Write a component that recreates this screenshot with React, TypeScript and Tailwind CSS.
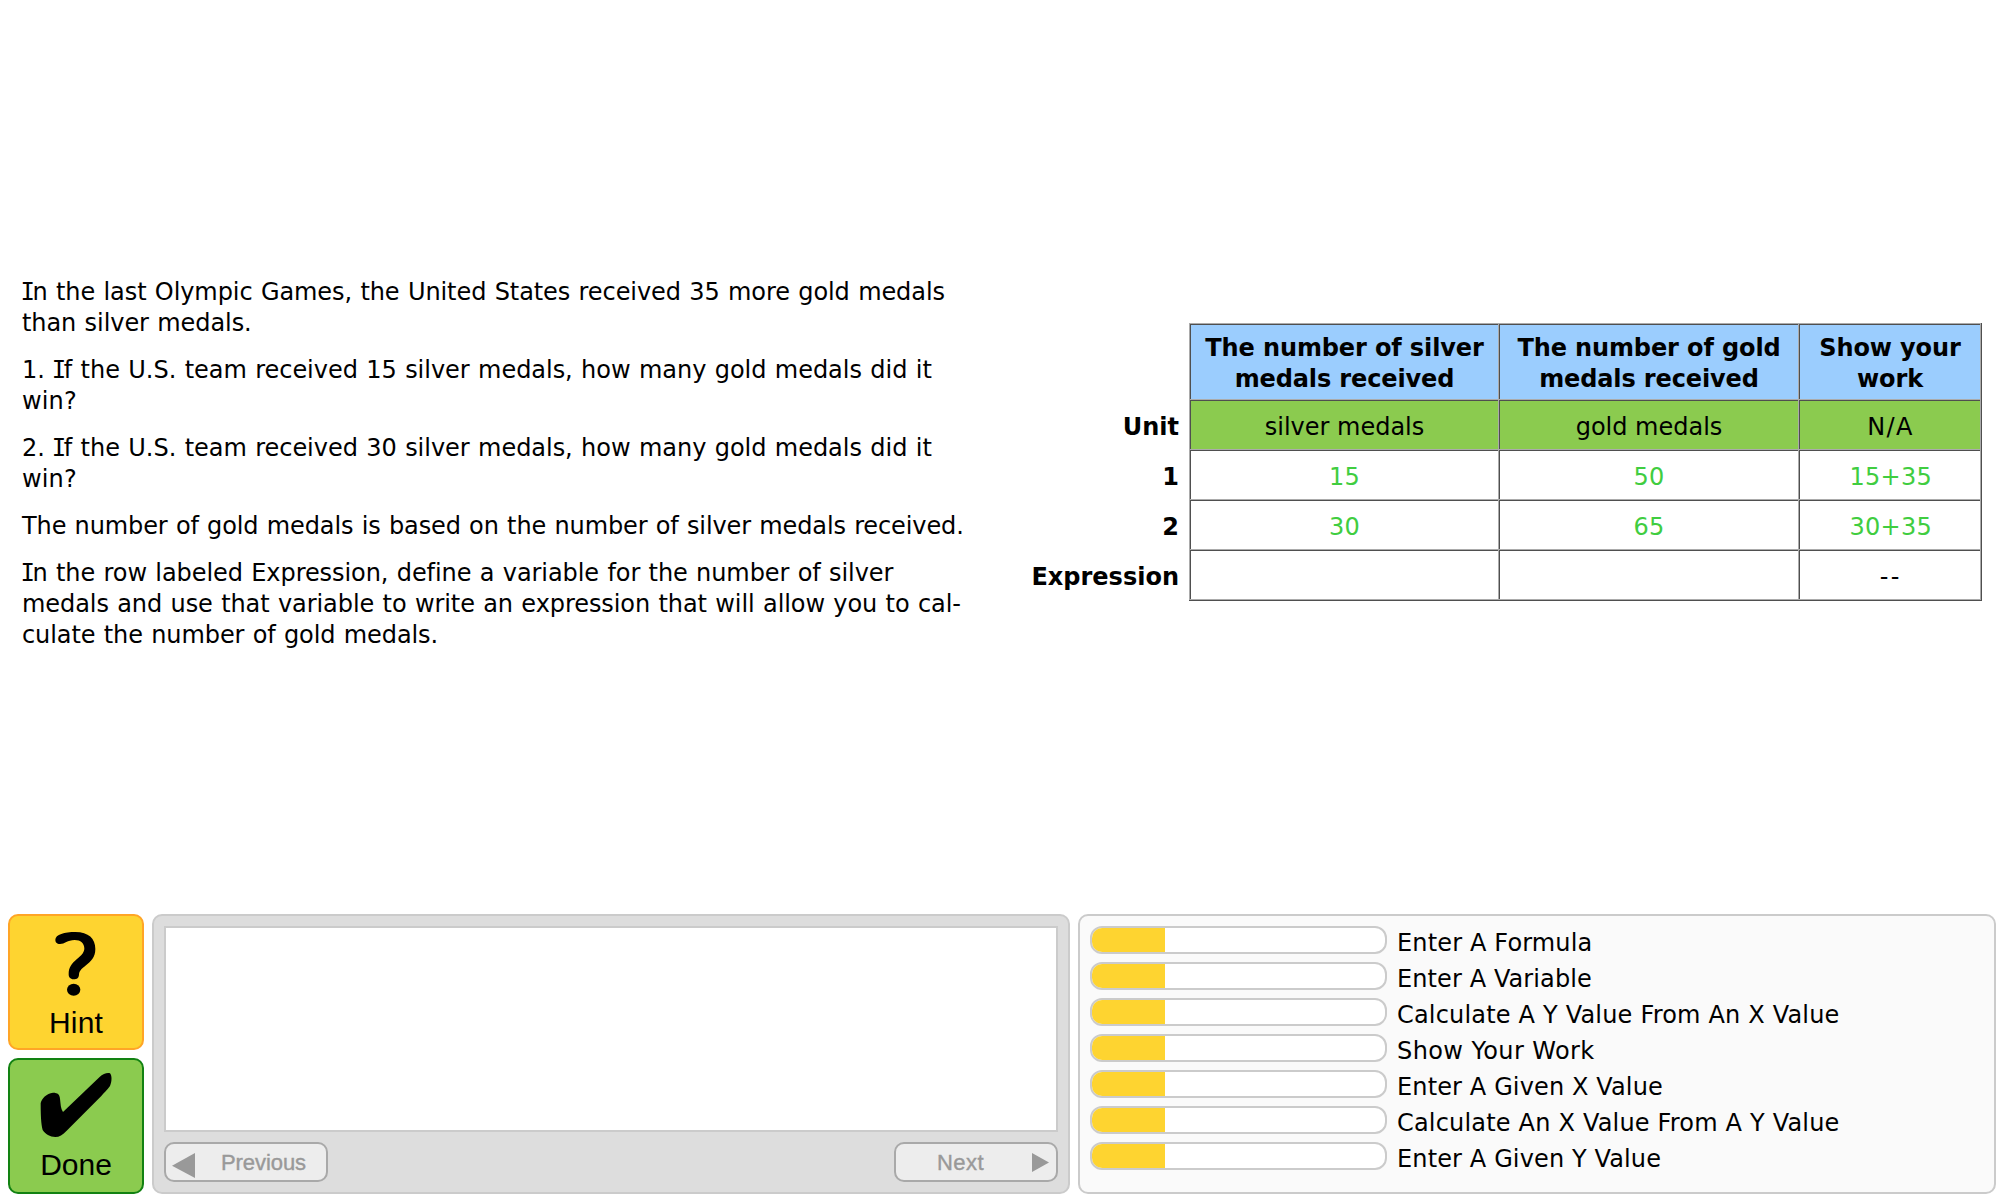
type Line = { text: string; spacing: string };

const paragraphs: Line[][] = [
  [
    { text: 'In the last Olympic Games, the United States received 35 more gold medals', spacing: 'tracking-[-0.075px]' },
    { text: 'than silver medals.', spacing: 'tracking-[-0.07px]' },
  ],
  [
    { text: '1. If the U.S. team received 15 silver medals, how many gold medals did it', spacing: 'tracking-[-0.03px]' },
    { text: 'win?', spacing: 'tracking-[0.16px]' },
  ],
  [
    { text: '2. If the U.S. team received 30 silver medals, how many gold medals did it', spacing: 'tracking-[-0.03px]' },
    { text: 'win?', spacing: 'tracking-[0.16px]' },
  ],
  [{ text: 'The number of gold medals is based on the number of silver medals received.', spacing: 'tracking-[-0.115px]' }],
  [
    { text: 'In the row labeled Expression, define a variable for the number of silver', spacing: 'tracking-[-0.07px]' },
    { text: 'medals and use that variable to write an expression that will allow you to cal-', spacing: 'tracking-[-0.07px]' },
    { text: 'culate the number of gold medals.', spacing: 'tracking-[-0.09px]' },
  ],
];

const rowLabels = ['Unit', '1', '2', 'Expression'];

const headers = [
  ['The number of silver', 'medals received'],
  ['The number of gold', 'medals received'],
  ['Show your', 'work'],
];

const rows: { cells: string[]; style: string }[] = [
  { cells: ['silver medals', 'gold medals', 'N/A'], style: 'bg-[#8bcb4f] text-black' },
  { cells: ['15', '50', '15+35'], style: 'bg-white text-[#40cd40] tracking-[0.27px]' },
  { cells: ['30', '65', '30+35'], style: 'bg-white text-[#40cd40] tracking-[0.27px]' },
  { cells: ['', '', '--'], style: 'bg-white text-black tracking-[2.3px]' },
];

const skills = [
  { name: 'Enter A Formula', level: 25, spacing: 'tracking-[0.15px]' },
  { name: 'Enter A Variable', level: 25, spacing: 'tracking-[0.1px]' },
  { name: 'Calculate A Y Value From An X Value', level: 25, spacing: 'tracking-[0.19px]' },
  { name: 'Show Your Work', level: 25, spacing: 'tracking-[0.4px]' },
  { name: 'Enter A Given X Value', level: 25, spacing: 'tracking-[0.13px]' },
  { name: 'Calculate An X Value From A Y Value', level: 25, spacing: 'tracking-[0.19px]' },
  { name: 'Enter A Given Y Value', level: 25, spacing: 'tracking-[0.13px]' },
];

const cell = 'border-l border-t border-[#ababab] shadow-[inset_1px_1px_0_#4f4f4f] pl-px pt-[5px] flex flex-col items-center justify-center';

// Sets a capital I with serifs, which the sans face lacks.
function SerifI({ text }: { text: string }) {
  const at = text.search(/\bI[nf]\b/);
  if (at < 0) return <>{text}</>;
  return (
    <>
      {text.slice(0, at)}
      <span className="-ml-[1.6px] -mr-[2.3px] font-['DejaVu_Sans_Mono',monospace] leading-none">I</span>
      {text.slice(at + 1)}
    </>
  );
}

function Problem() {
  return (
    <section className="flex w-[1000px] flex-col gap-4 pl-[22px] pt-[277px] [word-spacing:0.8px]">
      {paragraphs.map((lines, i) => (
        <p key={i} className="whitespace-nowrap">
          {lines.map((l) => (
            <span key={l.text} className={`block h-[31px] ${l.spacing}`}><SerifI text={l.text} /></span>
          ))}
        </p>
      ))}
    </section>
  );
}

function Worksheet() {
  return (
    <section className="flex pt-[323px]">
      <div className="flex w-[189px] flex-col pr-2.5 pt-[76px] text-right font-bold">
        {rowLabels.map((l) => (
          <div key={l} className="flex h-[50px] items-center justify-end pt-1.5">{l}</div>
        ))}
      </div>
      <div className="h-[278px] w-[793px] border-b border-r border-[#4f4f4f]">
        <div className="grid h-full grid-cols-[309px_300px_182px] grid-rows-[76px_50px_50px_50px_50px] border-b border-r border-[#ababab]">
          {headers.map((h) => (
            <div key={h[0]} className={`${cell} bg-[#9bcdfe] font-bold tracking-[-0.12px]`}>
              <span>{h[0]}</span>
              <span>{h[1]}</span>
            </div>
          ))}
          {rows.map((r, i) =>
            r.cells.map((c, j) => (
              <div key={`${i}-${j}`} className={`${cell} ${r.style}`}>
                {j === 2 ? <span className={c === 'N/A' ? 'pl-px tracking-[1.3px]' : 'pl-[1.5px]'}>{c}</span> : c}
              </div>
            )),
          )}
        </div>
      </div>
    </section>
  );
}

function HintIcon() {
  return (
    <svg viewBox="0 0 270 240" className="h-20 w-[90px]" aria-hidden="true">
      <path d="M90 72C80 72 76 66 76 59C76 44 104 36 136 36C176 36 196 56 196 87C196 112 183 124 168 136C156 146 148 152 147 163C147 174 141 178 131 178C120 178 116 171 116 163C116 142 124 132 140 118C156 105 163 97 163 85C163 70 152 60 134 60C112 60 104 72 90 72Z" />
      <ellipse cx="131" cy="209" rx="20" ry="18" />
    </svg>
  );
}

function CheckIcon() {
  return (
    <svg viewBox="0 0 270 240" className="h-20 w-[90px]" aria-hidden="true">
      <path d="M69 86C84 86 89 92 90 104C92 120 92 134 99 144L208 40C220 28 232 26 240 28C246 34 246 52 240 66C232 78 222 86 214 96L110 200C98 212 88 219 76 219C60 219 46 210 38 198C33 180 32 150 32 118C34 104 50 88 69 86Z" />
    </svg>
  );
}

function Toolbar() {
  const button = 'flex h-[136px] w-[136px] flex-col items-start rounded-[10px] border-2 pl-5 pt-1';
  return (
    <div className="flex w-[136px] flex-col gap-2 font-['Liberation_Sans',Arial,sans-serif] text-[30px] leading-[34px]">
      <button className={`${button} border-[#ffa526] bg-[#fed430]`}>
        <HintIcon />
        <span className="-ml-5 w-[132px] pt-1.5 text-center tracking-[0.16px]">Hint</span>
      </button>
      <button className={`${button} border-[#128212] bg-[#8bcb4f]`}>
        <CheckIcon />
        <span className="-ml-5 w-[132px] pt-1 text-center">Done</span>
      </button>
    </div>
  );
}

function Messages() {
  const nav = 'flex h-10 w-[164px] items-center rounded-[10px] border-2 border-[#a9a9a9] bg-[#ededed]';
  return (
    <div className="flex h-[280px] w-[918px] flex-col gap-2.5 rounded-[10px] border-2 border-[#cbcbcb] bg-[#dddddd] p-2.5">
      <div className="flex-1 border-2 border-[#cbcbcb] bg-white" />
      <div className="flex justify-between font-['Liberation_Sans',Arial,sans-serif] text-[22px] leading-[26px] text-[#999999] [-webkit-text-stroke:0.4px_#999999]">
        <button className={nav}>
          <svg viewBox="0 0 23 25" className="ml-1.5 mt-1.5 h-[25px] w-[23px]" aria-hidden="true">
            <path d="M0 12.7L23 0V25Z" fill="#999999" />
          </svg>
          <span className="ml-[26px] pt-0.5 tracking-[-0.08px]">Previous</span>
        </button>
        <button className={nav}>
          <span className="ml-[41px] w-[95px] pt-0.5 text-left tracking-[0.45px]">Next</span>
          <svg viewBox="0 0 17 19" className="h-[19px] w-[17px]" aria-hidden="true">
            <path d="M17 9.5L0 0V19Z" fill="#999999" />
          </svg>
        </button>
      </div>
    </div>
  );
}

function Skills() {
  return (
    <div className="flex h-[280px] w-[918px] flex-col gap-2 rounded-[10px] border-2 border-[#cbcbcb] bg-[#fafafa] p-2.5">
      {skills.map((s) => (
        <div key={s.name} className="flex h-7 gap-2.5">
          <div className="h-7 w-[297px] overflow-hidden rounded-xl border-2 border-[#cbcbcb] bg-white">
            <div className="h-full bg-[#fed430]" style={{ width: `${s.level}%` }} />
          </div>
          <span className={`pt-0.5 ${s.spacing}`}>{s.name}</span>
        </div>
      ))}
    </div>
  );
}

export default function App() {
  return (
    <div className="flex h-[1200px] w-[2000px] flex-col overflow-hidden bg-white font-['DejaVu_Sans',Verdana,sans-serif] text-[24px] leading-[31px] text-black">
      <main className="flex h-[914px]">
        <Problem />
        <Worksheet />
      </main>
      <footer className="flex gap-2 pl-2">
        <Toolbar />
        <Messages />
        <Skills />
      </footer>
    </div>
  );
}
